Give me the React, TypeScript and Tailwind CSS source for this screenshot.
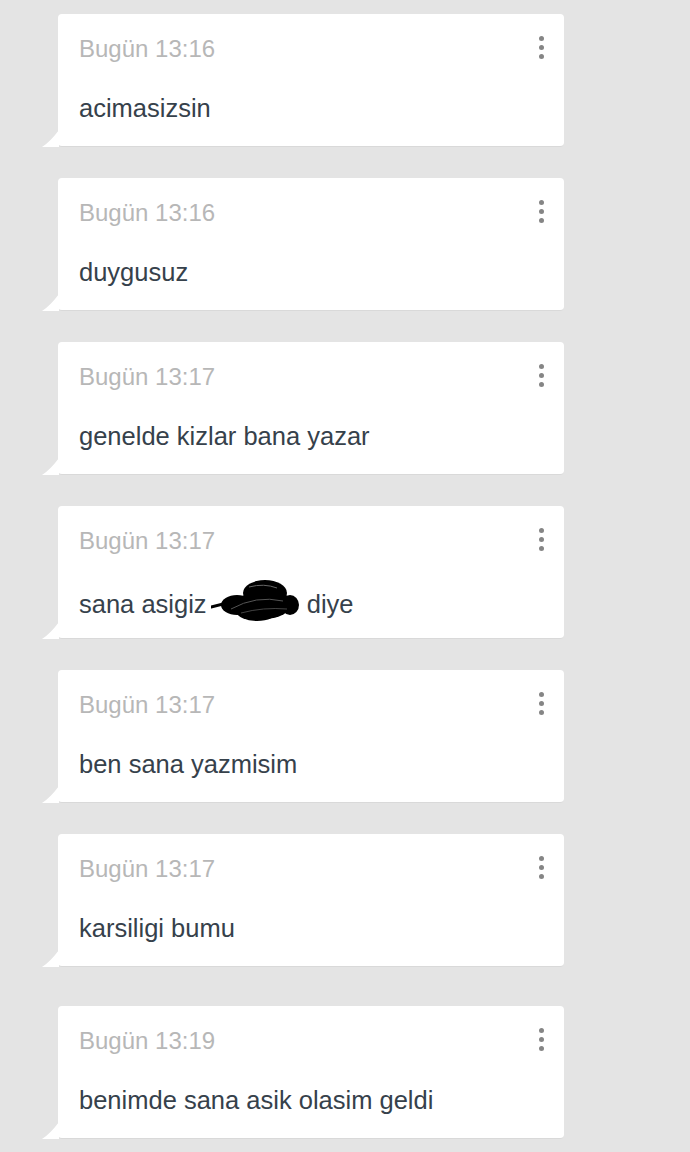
import { ReactNode } from 'react'

interface Message {
  time: string
  body: ReactNode
}

// hand-drawn redaction over a name
function Scribble() {
  return (
    <svg
      width="88"
      height="42"
      viewBox="0 0 88 42"
      className="inline-block align-middle -ml-[3px] mr-[1px] relative -top-[6px]"
    >
      <path d="M0 28 Q10 25 20 24" stroke="#000" strokeWidth="3" fill="none" strokeLinecap="round" />
      <ellipse cx="26" cy="26" rx="16" ry="10" fill="#000" />
      <ellipse cx="54" cy="14" rx="22" ry="13" fill="#000" />
      <ellipse cx="54" cy="25" rx="26" ry="15" fill="#000" />
      <ellipse cx="46" cy="33" rx="20" ry="9" fill="#000" />
      <ellipse cx="79" cy="26" rx="9" ry="10" fill="#000" />
      <path d="M20 30 Q45 16 72 22" stroke="#555" strokeWidth="1" fill="none" />
      <path d="M30 34 Q52 28 76 30" stroke="#444" strokeWidth="1" fill="none" />
      <path d="M38 8 Q53 4 66 9" stroke="#666" strokeWidth="1" fill="none" />
    </svg>
  )
}

const messages: Message[] = [
  { time: 'Bugün 13:16', body: 'acimasizsin' },
  { time: 'Bugün 13:16', body: 'duygusuz' },
  { time: 'Bugün 13:17', body: 'genelde kizlar bana yazar' },
  {
    time: 'Bugün 13:17',
    body: (
      <>
        sana asigiz <Scribble /> diye
      </>
    ),
  },
  { time: 'Bugün 13:17', body: 'ben sana yazmisim' },
  { time: 'Bugün 13:17', body: 'karsiligi bumu' },
  { time: 'Bugün 13:19', body: 'benimde sana asik olasim geldi' },
]

function Bubble({ time, body }: Message) {
  return (
    <div className="relative w-[506px] h-[133px] bg-white rounded-[4px] border-b border-[#d9d9d9] pl-[21px] pr-[20px] pt-[20px]">
      {/* header: timestamp + menu dots */}
      <div className="flex items-center justify-between h-[30px]">
        <span className="text-[24px] leading-[30px] text-[#b7b7b7]">{time}</span>
        <div className="flex flex-col items-center gap-[4px] -mt-[4px]">
          <span className="w-[5px] h-[5px] rounded-full bg-[#858585]" />
          <span className="w-[5px] h-[5px] rounded-full bg-[#858585]" />
          <span className="w-[5px] h-[5px] rounded-full bg-[#858585]" />
        </div>
      </div>
      <div className="mt-[29px] text-[25.5px] leading-[30px] text-[#36414b] whitespace-nowrap">
        {body}
      </div>

      {/* tail */}
      <svg
        width="17"
        height="17"
        viewBox="0 0 17 17"
        className="absolute -left-[16px] bottom-[-1px]"
      >
        <path d="M17 0 L17 17 L0 17 Q8 12 17 0 Z" fill="#fff" />
      </svg>
    </div>
  )
}

export default function App() {
  return (
    <div
      className="min-h-[1152px] w-[690px] bg-[#e4e4e4] pl-[58px] pt-[14px] pb-[13px] overflow-hidden"
      style={{ fontFamily: '"Liberation Sans", Arial, sans-serif' }}
    >
      <div className="flex flex-col gap-[31px]">
        {messages.map((m, i) => (
          <div key={i} className={i === messages.length - 1 ? 'mt-[8px]' : ''}>
            <Bubble {...m} />
          </div>
        ))}
      </div>
    </div>
  )
}
